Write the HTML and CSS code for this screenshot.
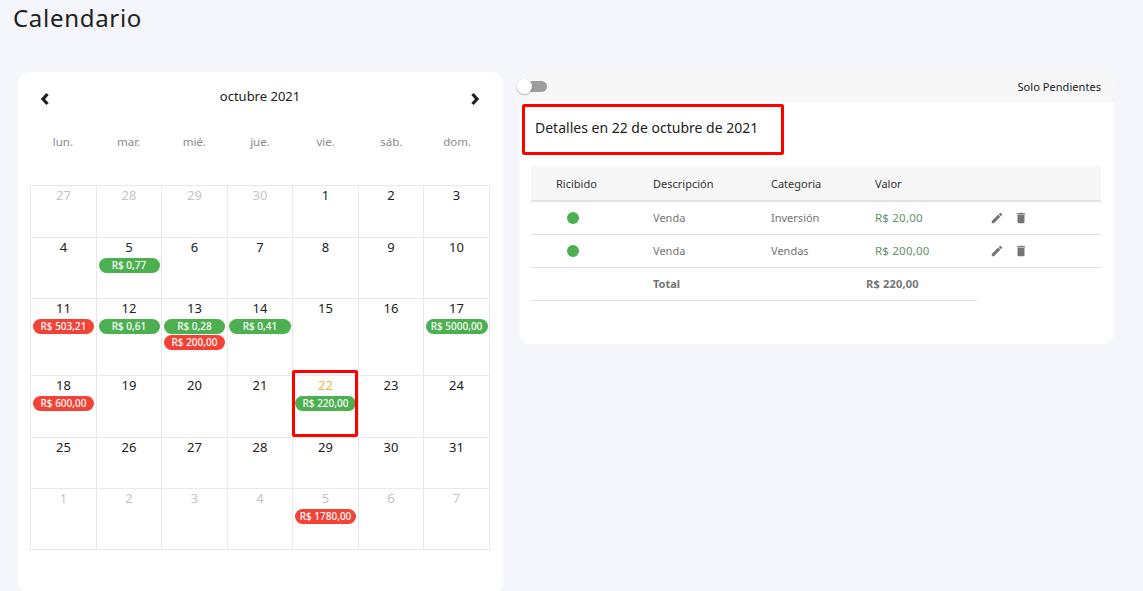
FILE: index.html
```html
<!DOCTYPE html>
<html lang="es">
<head>
<meta charset="utf-8">
<title>Calendario</title>
<link rel="stylesheet" href="styles.css">
</head>
<body>
<h1 class="page-title">Calendario</h1>
<main class="layout">
  <section class="card cal-card">
    <div class="cal-head">
      <svg class="chev" viewBox="0 0 10 14"><path d="M7.500 2 3 7l4.500 5" /></svg>
      <span class="cal-month">octubre 2021</span>
      <svg class="chev" viewBox="0 0 10 14"><path d="M2.500 2 7 7l-4.500 5" /></svg>
    </div>
    <div class="weekdays">
      <span>lun.</span><span>mar.</span><span>mié.</span><span>jue.</span><span>vie.</span><span>sáb.</span><span>dom.</span>
    </div>
    <div class="month">
      <div class="day off">27</div><div class="day off">28</div><div class="day off">29</div><div class="day off">30</div><div class="day">1</div><div class="day">2</div><div class="day">3</div>
      <div class="day">4</div><div class="day">5<span class="pill green">R$ 0,77</span></div><div class="day">6</div><div class="day">7</div><div class="day">8</div><div class="day">9</div><div class="day">10</div>
      <div class="day">11<span class="pill red">R$ 503,21</span></div><div class="day">12<span class="pill green">R$ 0,61</span></div><div class="day">13<span class="pill green">R$ 0,28</span><span class="pill red">R$ 200,00</span></div><div class="day">14<span class="pill green wide">R$ 0,41</span></div><div class="day">15</div><div class="day">16</div><div class="day">17<span class="pill green wide">R$ 5000,00</span></div>
      <div class="day">18<span class="pill red">R$ 600,00</span></div><div class="day">19</div><div class="day">20</div><div class="day">21</div><div class="day today">22<span class="pill green">R$ 220,00</span><i class="mark"></i></div><div class="day">23</div><div class="day">24</div>
      <div class="day">25</div><div class="day">26</div><div class="day">27</div><div class="day">28</div><div class="day">29</div><div class="day">30</div><div class="day">31</div>
      <div class="day off">1</div><div class="day off">2</div><div class="day off">3</div><div class="day off">4</div><div class="day off">5<span class="pill red">R$ 1780,00</span></div><div class="day off">6</div><div class="day off">7</div>
    </div>
  </section>
  <section class="card detail-card">
    <div class="detail-top">
      <span class="toggle"><i class="knob"></i></span>
      <span class="toggle-label">Solo Pendientes</span>
    </div>
    <h2 class="detail-title">Detalles en 22 de octubre de 2021</h2>
    <table class="tx">
      <colgroup><col class="c1"><col class="c2"><col class="c3"><col class="c4"><col class="c5"></colgroup>
      <thead>
        <tr><th>Ricibido</th><th>Descripción</th><th>Categoria</th><th>Valor</th><th></th></tr>
      </thead>
      <tbody>
        <tr>
          <td><i class="dot"></i></td><td>Venda</td><td>Inversión</td><td class="amount">R$ 20,00</td>
          <td class="actions">
            <svg viewBox="0 0 24 24"><path d="M3 17.250V21h3.750L17.810 9.940l-3.750-3.750L3 17.250zM20.710 7.040c.39-.39.39-1.020 0-1.410l-2.340-2.340c-.39-.39-1.020-.39-1.410 0l-1.830 1.830 3.750 3.750 1.830-1.830z"/></svg>
            <svg viewBox="0 0 24 24"><path d="M6 19c0 1.100.9 2 2 2h8c1.100 0 2-.9 2-2V7H6v12zM19 4h-3.500l-1-1h-5l-1 1H5v2h14V4z"/></svg>
          </td>
        </tr>
        <tr>
          <td><i class="dot"></i></td><td>Venda</td><td>Vendas</td><td class="amount">R$ 200,00</td>
          <td class="actions">
            <svg viewBox="0 0 24 24"><path d="M3 17.250V21h3.750L17.810 9.940l-3.750-3.750L3 17.250zM20.710 7.040c.39-.39.39-1.020 0-1.410l-2.340-2.340c-.39-.39-1.020-.39-1.410 0l-1.830 1.830 3.750 3.750 1.830-1.830z"/></svg>
            <svg viewBox="0 0 24 24"><path d="M6 19c0 1.100.9 2 2 2h8c1.100 0 2-.9 2-2V7H6v12zM19 4h-3.500l-1-1h-5l-1 1H5v2h14V4z"/></svg>
          </td>
        </tr>
        <tr class="total">
          <td></td><td>Total</td><td></td><td class="total-value">R$ 220,00</td><td class="blank"></td>
        </tr>
      </tbody>
    </table>
  </section>
</main>
</body>
</html>
```
FILE: styles.css
```css
* { box-sizing: border-box; }
html, body { height: 100%; }
body {
  margin: 0;
  height: 591px;
  overflow: hidden;
  background: #f4f6fb;
  color: #212121;
  font-family: "Noto Sans", "Open Sans", sans-serif;
}
.page-title {
  margin: 0;
  padding: 2px 0 0 13px;
  height: 72px;
  font-size: 24px;
  line-height: 32px;
  font-weight: 400;
  letter-spacing: .7px;
}
.layout {
  display: flex;
  align-items: flex-start;
  gap: 16px;
  padding-left: 18px;
}
.card {
  background: #fff;
  border-radius: 12px;
}
.cal-card {
  width: 485px;
  height: 522px;
  padding: 0 13px 0 12px;
}
.cal-head {
  display: flex;
  justify-content: space-between;
  align-items: center;
  height: 50px;
  padding: 3px 10px 0;
}
.chev {
  width: 10px;
  height: 14px;
  fill: none;
  stroke: #212121;
  stroke-width: 3.200;
}
.cal-month {
  margin-top: -6px;
  font-size: 13px;
}
.weekdays {
  display: grid;
  grid-template-columns: repeat(7, 1fr);
  height: 63px;
  padding-top: 10px;
  text-align: center;
  font-size: 11.500px;
  line-height: 20px;
  color: #8a8a8a;
}
.month {
  display: grid;
  grid-template-columns: 66px 65px 66px 65px 66px 65px 66px;
  grid-template-rows: 52px 61px 77px 62px 51px 61px;
  width: 460px;
  border-left: 1px solid #e8e8e8;
  border-top: 1px solid #e8e8e8;
}
.day {
  position: relative;
  display: flex;
  flex-direction: column;
  align-items: center;
  border-right: 1px solid #e8e8e8;
  border-bottom: 1px solid #e8e8e8;
  font-size: 13px;
  line-height: 18px;
}
.day.off { color: #c4c4c4; }
.day.today { color: #f5b83d; }
.pill {
  width: 61px;
  height: 15px;
  margin-top: 2px;
  margin-bottom: -1px;
  border-radius: 8px;
  font-size: 10px;
  line-height: 15px;
  font-weight: 500;
  text-align: center;
  white-space: nowrap;
  color: #fff;
}
.pill.wide { width: 62px; }
.green { background: #4caf50; }
.red { background: #f44336; }
.mark {
  position: absolute;
  top: -6px;
  left: -1px;
  width: 66px;
  height: 67px;
  border: 3px solid #f00;
  border-radius: 2px;
}
.detail-card {
  width: 595px;
  height: 272px;
  overflow: visible;
}
.detail-top {
  display: flex;
  justify-content: space-between;
  align-items: center;
  height: 30px;
  padding: 0 13px 1px 0;
  background: #f7f7f7;
  border-radius: 12px 12px 0 0;
}
.toggle {
  position: relative;
  width: 20px;
  height: 11px;
  margin-left: 8px;
  border-radius: 6px;
  background: #9e9e9e;
}
.knob {
  position: absolute;
  top: -2px;
  left: -10px;
  width: 15px;
  height: 15px;
  border-radius: 50%;
  background: #fff;
  box-shadow: 0 1px 2px rgba(0, 0, 0, .3);
}
.toggle-label { font-size: 11px; letter-spacing: .05px; }
.detail-title {
  width: 262px;
  height: 51px;
  margin: 2px 0 11px 3px;
  padding-left: 10px;
  border: 3px solid #f00;
  border-radius: 2px;
  font-size: 14px;
  font-weight: 400;
  line-height: 42px;
  white-space: nowrap;
}
.tx {
  width: 570px;
  margin-left: 12px;
  border-collapse: collapse;
  table-layout: fixed;
  font-size: 11px;
}
.c1 { width: 110px; }
.c2 { width: 118px; }
.c3 { width: 104px; }
.c4 { width: 114px; }
.c5 { width: 124px; }
.tx th {
  height: 35px;
  padding: 0 0 0 12px;
  background: #f7f7f7;
  border-bottom: 2px solid #e2e2e2;
  font-weight: 400;
  text-align: left;
  color: #333;
}
.tx th:first-child, .tx td:first-child { padding-left: 25px; }
.tx td {
  height: 33px;
  padding: 0 0 0 12px;
  border-bottom: 1px solid #e2e2e2;
  color: #757575;
}
.dot {
  display: block;
  width: 12px;
  height: 12px;
  margin-left: 11px;
  border-radius: 50%;
  background: #4caf50;
}
.tx .amount { color: #5f9468; font-size: 11.500px; letter-spacing: .2px; }
.actions svg {
  width: 14px;
  height: 14px;
  margin-right: 7px;
  vertical-align: -3px;
  fill: #757575;
}
.tx .actions { padding-left: 13px; }
.total td { font-weight: 700; }
.tx .total-value { padding-left: 3px; letter-spacing: .2px; }
.tx .blank { border-bottom: 0; }
```
